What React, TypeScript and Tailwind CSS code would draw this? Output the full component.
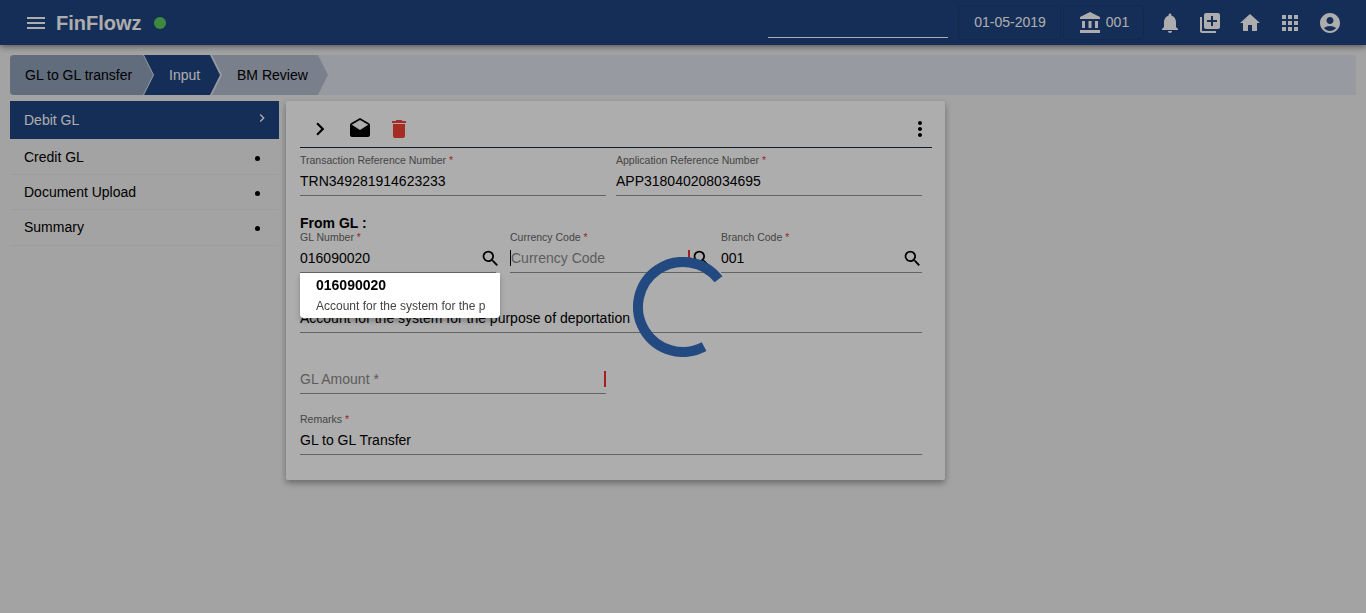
import React from "react";
import {
  MdMenu, MdNotifications, MdLibraryAdd, MdHome, MdApps, MdAccountCircle, MdAccountBalance,
  MdSearch, MdChevronRight, MdDrafts, MdDelete, MdMoreVert,
} from "react-icons/md";

const font = { fontFamily: '"Liberation Sans", Arial, sans-serif' };

function Field({ label, value, placeholder, className = "", iconClass, barClass, caret, children }: {
  label?: string; value?: string; placeholder?: string; className?: string; iconClass?: string; barClass?: string; caret?: boolean; children?: React.ReactNode;
}) {
  return (
    <div className={`relative h-[42px] border-b border-[#949494] ${className}`}>
      {label && (
        <div className="absolute left-0 top-0 h-[13px] whitespace-nowrap text-[10.5px] leading-[13px] text-[#666]">
          {label} <span className="text-[#e53935]">*</span>
        </div>
      )}
      {value && <div className="absolute left-0 top-[18px] h-[18px] whitespace-nowrap text-[14px] leading-[18px] text-black">{value}</div>}
      {placeholder && (
        <div className={`absolute top-[18px] h-[18px] whitespace-nowrap text-[14px] leading-[18px] text-[#8a8a8a] ${caret ? "left-[1px]" : "left-0"}`}>
          {placeholder}
        </div>
      )}
      {caret && <div className="absolute left-0 top-[19px] h-[16px] w-px bg-black" />}
      {barClass && <div className={`absolute top-[19px] h-[16px] w-[2px] bg-[#f03030] ${barClass}`} />}
      {iconClass && <MdSearch className={`absolute top-[17px] text-black ${iconClass}`} size={21} />}
      {children}
    </div>
  );
}

function Step({ children, className, z }: { children: React.ReactNode; className: string; z: string }) {
  return <div className={`flex h-10 items-center whitespace-nowrap text-[14px] ${className} ${z}`}>{children}</div>;
}

function SideItem({ children, className }: { children: React.ReactNode; className: string }) {
  return (
    <div className={`flex items-center justify-between border-b border-[#e6e6e6] pl-[14px] pr-[19px] text-[14px] text-black ${className}`}>
      <span>{children}</span>
      <span className="mt-[2px] h-[5px] w-[5px] rounded-full bg-black" />
    </div>
  );
}

export default function App() {
  return (
    <div className="relative h-[613px] w-[1366px] overflow-hidden bg-[#f0f0f0]" style={font}>
      <header className="relative flex h-[45px] items-center bg-[#1f4480] pl-[24px] pr-[24px] text-white shadow-[0_2px_6px_rgba(0,0,0,0.45)]">
        <MdMenu size={24} />
        <span className="ml-[8px] text-[20px] font-bold leading-none">FinFlowz</span>
        <span className="ml-[12px] h-3 w-3 rounded-full bg-[#5ccb5f]" />
        <div className="ml-auto mt-[-8px] h-[38px] w-[180px] border-b border-white" />
        <div className="ml-[10px] flex h-[35px] w-[103px] items-center justify-center rounded-[4px] border border-[#1b3d73] pl-[1px] text-[14px]">01-05-2019</div>
        <div className="ml-[2px] flex h-[35px] w-[81px] items-center justify-center gap-[4px] rounded-[4px] border border-[#1b3d73] text-[14px]">
          <MdAccountBalance size={24} />
          <span>001</span>
        </div>
        <div className="ml-[14px] flex items-center gap-[16px]">
          <MdNotifications size={24} />
          <MdLibraryAdd size={24} />
          <MdHome size={24} />
          <MdApps size={24} />
          <MdAccountCircle size={24} />
        </div>
      </header>

      <div className="mx-[10px] mt-[10px] flex h-10 bg-[#dfe5ee]">
        <Step z="z-[3]" className="w-[143px] rounded-l-[4px] bg-[#90a0b8] pl-[15px] text-black [clip-path:polygon(0_0,133px_0,100%_50%,133px_100%,0_100%)]">GL to GL transfer</Step>
        <Step z="z-[2]" className="ml-[-10px] w-[77px] bg-[#1f4480] pl-[26px] text-white [clip-path:polygon(1px_0,67px_0,100%_50%,67px_100%,1px_100%,11px_50%)]">Input</Step>
        <Step z="z-[1]" className="ml-[-10px] w-[118px] bg-[#b3bdcd] pl-[27px] text-black [clip-path:polygon(2px_0,108px_0,100%_50%,108px_100%,2px_100%,12px_50%)]">BM Review</Step>
      </div>

      <div className="mx-[10px] mt-[6px] flex items-start gap-[7px]">
        <aside className="w-[269px] shrink-0">
          <div className="flex h-[38px] items-center justify-between bg-[#1f4480] pl-[14px] pr-[9px] text-[14px] text-white">
            <span>Debit GL</span>
            <MdChevronRight size={16} className="mt-[-5px]" />
          </div>
          <SideItem className="h-[36px] pt-[1px]">Credit GL</SideItem>
          <SideItem className="h-[35px]">Document Upload</SideItem>
          <SideItem className="h-[36px]">Summary</SideItem>
        </aside>

        <main className="h-[379px] w-[659px] rounded-[2px] bg-white pl-[14px] pr-[13px] shadow-[0_3px_6px_rgba(0,0,0,0.35)]">
          <div className="flex h-[47px] items-center border-b border-[#1f2937] pt-[9px]">
            <MdChevronRight size={26} className="ml-[7px] text-black" />
            <MdDrafts size={24} className="ml-[15px] text-black" />
            <MdDelete size={24} className="ml-[15px] text-[#f44336]" />
            <MdMoreVert size={24} className="ml-auto text-black" />
          </div>

          <div className="mr-[10px] mt-[6px] grid grid-cols-2 gap-x-[10px]">
            <Field label="Transaction Reference Number" value="TRN349281914623233" />
            <Field label="Application Reference Number" value="APP318040208034695" />
          </div>

          <div className="mt-[20px] h-[15px] text-[14px] font-bold leading-[15px] text-black">From GL :</div>

          <div className="relative mr-[10px] flex gap-[14px]">
            <Field label="GL Number" value="016090020" iconClass="right-[-5px]" className="w-[196px]">
              <div className="absolute left-0 top-[42px] z-20 h-[45px] w-[200px] rounded-b-[4px] bg-white pl-[16px] shadow-[0_3px_5px_rgba(0,0,0,0.25)]">
                <div className="mt-[4px] h-[16px] text-[14px] font-bold leading-[16px] text-black">016090020</div>
                <div className="mt-[5px] whitespace-nowrap text-[12px] leading-[16px] text-[#444]">Account for the system for the p</div>
              </div>
            </Field>
            <Field label="Currency Code" placeholder="Currency Code" caret barClass="right-[17px]" iconClass="right-[-5px]" className="w-[197px]" />
            <Field label="Branch Code" value="001" iconClass="right-[-1px]" className="w-[201px]" />
          </div>

          <div className="mr-[10px] mt-[18px]">
            <Field value="Account for the system for the purpose of deportation" />
          </div>

          <div className="mr-[10px] mt-[19px] grid grid-cols-2 gap-x-[10px]">
            <Field placeholder="GL Amount *" barClass="right-0" />
          </div>

          <div className="mr-[10px] mt-[19px]">
            <Field label="Remarks" value="GL to GL Transfer" />
          </div>
        </main>
      </div>

      <div className="fixed inset-0 z-10 bg-black/32" />

      <div className="pointer-events-none fixed inset-0 z-30 flex items-center justify-center">
        <svg width="100" height="100" viewBox="-50 -50 100 100" fill="none">
          <path d="M35.5 -27.7 A45 45 0 1 0 21.1 39.7" stroke="#224a80" strokeWidth="10" />
        </svg>
      </div>
    </div>
  );
}
